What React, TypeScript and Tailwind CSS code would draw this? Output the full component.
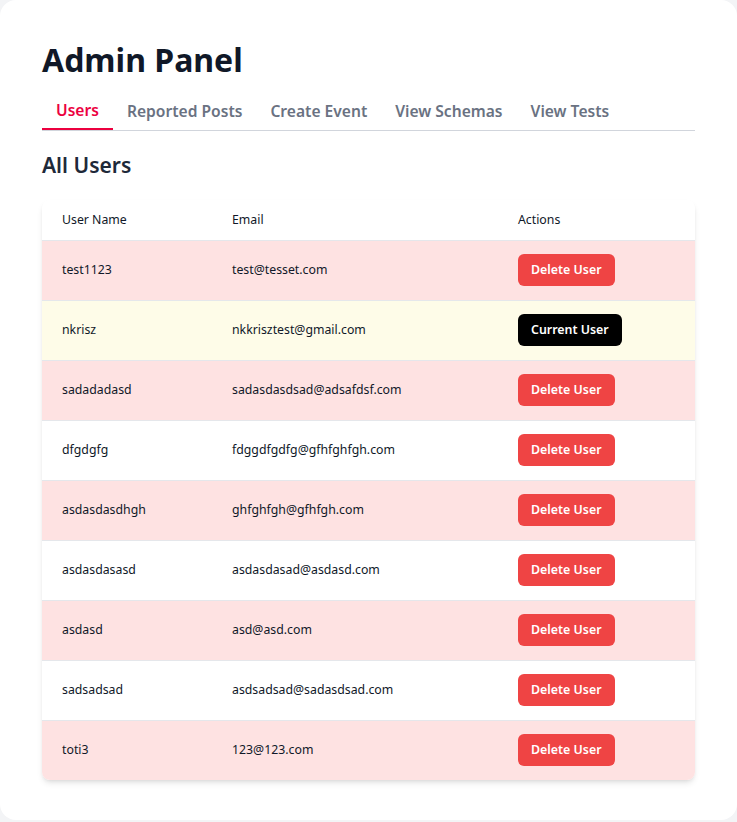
import React from 'react';

type UserRow = { name: string; email: string; current?: boolean };

const users: UserRow[] = [
  { name: 'test1123', email: 'test@tesset.com' },
  { name: 'nkrisz', email: 'nkkrisztest@gmail.com', current: true },
  { name: 'sadadadasd', email: 'sadasdasdsad@adsafdsf.com' },
  { name: 'dfgdgfg', email: 'fdggdfgdfg@gfhfghfgh.com' },
  { name: 'asdasdasdhgh', email: 'ghfghfgh@gfhfgh.com' },
  { name: 'asdasdasasd', email: 'asdasdasad@asdasd.com' },
  { name: 'asdasd', email: 'asd@asd.com' },
  { name: 'sadsadsad', email: 'asdsadsad@sadasdsad.com' },
  { name: 'toti3', email: '123@123.com' },
];

const tabs = ['Users', 'Reported Posts', 'Create Event', 'View Schemas', 'View Tests'];

const App: React.FC = () => {
  return (
    <div className="min-h-screen bg-gray-100" style={{ fontFamily: '"Noto Sans", sans-serif' }}>
      <div className="bg-white rounded-2xl min-h-[820px] px-[42px] pt-[38px] pb-10">
        {/* Header */}
        <h1 className="text-[32px] leading-[44px] font-bold text-gray-900">Admin Panel</h1>

        {/* Tabs */}
        <div className="flex border-b border-gray-300 mt-[12px]">
          {tabs.map((tab, i) => (
            <button
              key={tab}
              className={
                i === 0
                  ? 'px-[14px] h-9 text-[15.6px] font-semibold text-rose-600 border-b-2 border-rose-600 -mb-px'
                  : 'px-[14px] h-9 text-[15.6px] font-semibold text-gray-500'
              }
            >
              {tab}
            </button>
          ))}
        </div>

        {/* Section */}
        <h2 className="text-[21px] leading-[28px] font-semibold text-gray-800 mt-[20px]">All Users</h2>

        <div className="mt-[21px] rounded-lg shadow-md overflow-hidden bg-white">
          <table className="w-full text-left text-[12.3px] text-gray-900">
            <thead>
              <tr className="h-10 border-b border-gray-200">
                <th className="pl-5 font-normal w-[190px]">User Name</th>
                <th className="font-normal w-[286px]">Email</th>
                <th className="font-normal">Actions</th>
              </tr>
            </thead>
            <tbody>
              {users.map((u, i) => {
                const bg = u.current ? 'bg-[#fefce8]' : i % 2 === 0 ? 'bg-[#fee2e2]' : 'bg-white';
                return (
                  <tr key={u.name} className={`h-[60px] border-b border-gray-200 last:border-b-0 ${bg}`}>
                    <td className="pl-5">{u.name}</td>
                    <td>{u.email}</td>
                    <td>
                      {u.current ? (
                        <button className="bg-black text-white font-semibold rounded-md px-[13px] h-8 text-[12.4px]">
                          Current User
                        </button>
                      ) : (
                        <button className="bg-[#ef4444] text-white font-semibold rounded-md px-[13px] h-8 text-[12.4px]">
                          Delete User
                        </button>
                      )}
                    </td>
                  </tr>
                );
              })}
            </tbody>
          </table>
        </div>
      </div>
    </div>
  );
};

export default App;
